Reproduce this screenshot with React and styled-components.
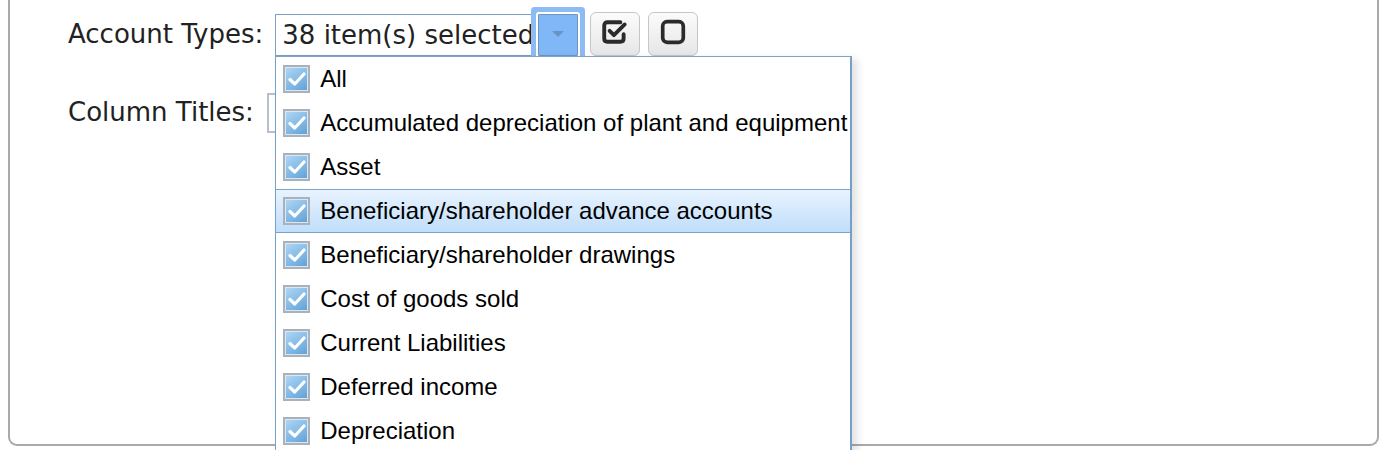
import React from "react";
import styled, { createGlobalStyle } from "styled-components";

const Global = createGlobalStyle`
  html, body { margin: 0; padding: 0; background: #fff; overflow: hidden; }
  #root { height: 450px; }
`;

const Panel = styled.div`
  position: relative;
  margin-left: 8px;
  width: 1371px;
  height: 446px;
  box-sizing: border-box;
  border: 2px solid #a9a9a9;
  border-top: none;
  border-radius: 0 0 9px 9px;
  padding-left: 58px;
`;

const Form = styled.div`
  display: flex;
  flex-direction: column;
  gap: 36px;
  padding-top: 14px;
`;

const Row = styled.div`
  display: flex;
  align-items: center;
  gap: ${(p) => p.$gap}px;
  height: 42px;
`;

const Label = styled.label`
  font-family: "DejaVu Sans", Verdana, sans-serif;
  font-size: 26px;
  color: #222;
  margin-top: -3px;
`;

const SelectWrap = styled.div`
  position: relative;
  display: flex;
  align-items: stretch;
  height: 42px;
`;

const Display = styled.div`
  width: 263px;
  height: 42px;
  box-sizing: border-box;
  border: 1px solid #7d9fc4;
  border-right: none;
  padding-left: 6px;
  font-family: "DejaVu Sans", Verdana, sans-serif;
  font-size: 26px;
  color: #222;
  line-height: 40px;
  white-space: nowrap;
  overflow: visible;
`;

const ArrowButton = styled.div`
  position: relative;
  z-index: 2;
  width: 40px;
  height: 42px;
  box-sizing: border-box;
  border: 1px solid #6f95bf;
  background: #80b7f7;
  border-radius: 1px;
  display: flex;
  align-items: center;
  justify-content: center;
  box-shadow: 0 0 0 2px #ffffff, 0 0 0 7px #8dbbf3;
`;

const Arrow = styled.span`
  width: 0;
  height: 0;
  border-left: 6px solid transparent;
  border-right: 6px solid transparent;
  border-top: 6px solid #6893c2;
  margin-top: -2px;
`;

const ToolButton = styled.button`
  width: 50px;
  height: 44px;
  margin-top: -2px;
  box-sizing: border-box;
  border: 1px solid #c6c6c6;
  border-radius: 6px;
  background: linear-gradient(#fbfbfb, #e6e6e6);
  display: flex;
  align-items: center;
  justify-content: center;
  padding: 0 0 4px 0;
  margin-left: ${(p) => p.$ml}px;
`;

const Input = styled.div`
  width: 320px;
  height: 40px;
  box-sizing: border-box;
  border: 2px solid #b7bfcc;
`;

const List = styled.ul`
  position: absolute;
  left: 0;
  top: 100%;
  width: 577px;
  margin: 0;
  padding: 0 0 6px 0;
  list-style: none;
  box-sizing: border-box;
  background: #fff;
  border: 2px solid #76a0c8;
  border-left-width: 1.5px;
  border-top: 1px solid #7da3c8;
  box-shadow: 5px 3px 8px rgba(0, 0, 0, 0.12);
  z-index: 5;
`;

const Item = styled.li`
  display: flex;
  align-items: center;
  gap: 10px;
  height: 44px;
  box-sizing: border-box;
  padding-left: 7px;
  font-family: "Liberation Sans", Arial, sans-serif;
  font-size: 24px;
  color: #000;
  white-space: nowrap;
  ${(p) =>
    p.$active
      ? `
    background: linear-gradient(#e8f3fe, #c0defb);
    border-top: 1px solid #7aa3c9;
    border-bottom: 1px solid #7aa3c9;
  `
      : ""}
`;

const Box = styled.span`
  flex: none;
  width: 27px;
  height: 28px;
  box-sizing: border-box;
  border: 2px solid #a9b2bb;
  box-shadow: inset 0 0 0 1px #dbe8f4;
  background: linear-gradient(145deg, #b3d7f3 0%, #86bde8 50%, #5e9fd4 100%);
  display: flex;
  align-items: center;
  justify-content: center;
`;

const Check = () => (
  <svg width="18" height="16" viewBox="0 0 18 16">
    <path d="M2 8.5 L6.8 13 L16 3" fill="none" stroke="#ffffff" strokeWidth="3.2" strokeLinecap="round" strokeLinejoin="round" />
  </svg>
);

const CheckSquareIcon = () => (
  <svg width="28" height="26" viewBox="0 0 26 24">
    <path
      d="M18 3 H6 Q3 3 3 6 V18 Q3 21 6 21 H18 Q21 21 21 18 V14"
      fill="none"
      stroke="#2b2b2b"
      strokeWidth="3.6"
      strokeLinecap="round"
      strokeLinejoin="round"
    />
    <path d="M8 11 L12 15 L22 5" fill="none" stroke="#2b2b2b" strokeWidth="3.6" strokeLinecap="round" strokeLinejoin="round" />
  </svg>
);

const SquareIcon = () => (
  <svg width="26" height="26" viewBox="0 0 24 24">
    <rect x="2.5" y="2.5" width="19" height="19" rx="4" fill="none" stroke="#2b2b2b" strokeWidth="3.4" />
  </svg>
);

const items = [
  "All",
  "Accumulated depreciation of plant and equipment",
  "Asset",
  "Beneficiary/shareholder advance accounts",
  "Beneficiary/shareholder drawings",
  "Cost of goods sold",
  "Current Liabilities",
  "Deferred income",
  "Depreciation",
];

export default function App() {
  return (
    <>
      <Global />
      <Panel>
        <Form>
          <Row $gap={12}>
            <Label>Account Types:</Label>
            <SelectWrap>
              <Display>38 item(s) selected</Display>
              <ArrowButton>
                <Arrow />
              </ArrowButton>
              <List>
                {items.map((t, i) => (
                  <Item key={t} $active={i === 3}>
                    <Box>
                      <Check />
                    </Box>
                    {t}
                  </Item>
                ))}
              </List>
            </SelectWrap>
            <ToolButton $ml={0}>
              <CheckSquareIcon />
            </ToolButton>
            <ToolButton $ml={-4}>
              <SquareIcon />
            </ToolButton>
          </Row>
          <Row $gap={13}>
            <Label>Column Titles:</Label>
            <Input />
          </Row>
        </Form>
      </Panel>
    </>
  );
}
